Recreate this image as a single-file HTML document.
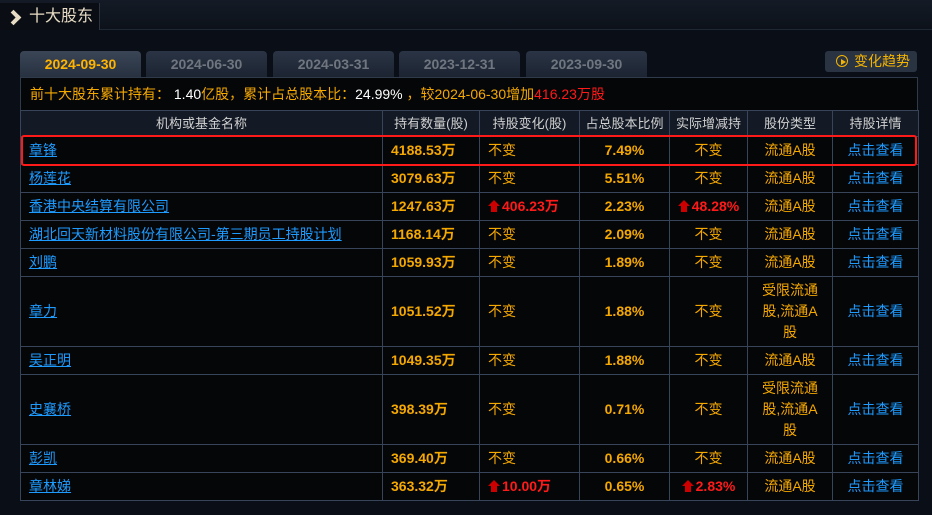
<!DOCTYPE html>
<html><head><meta charset="utf-8"><style>
*{margin:0;padding:0;box-sizing:border-box}
body{width:932px;height:515px;background:#0a0e16;font-family:"Liberation Sans","Noto Sans CJK SC",sans-serif;font-size:14px;position:relative;overflow:hidden;color:#f5a800}
.top{position:absolute;left:0;top:0;width:932px;height:30px;background:linear-gradient(#141b26,#0d121a);border-bottom:1px solid #1f2733}
.ttl{position:absolute;left:0;top:3px;width:100px;height:27px;background:#0a0e14;border-right:1px solid #2a3340;color:#e8dcc4;font-size:16px;line-height:27px;padding-left:29px}
.ttl:before{content:"";position:absolute;left:8px;top:9px;width:7px;height:7px;border-right:4px solid #e8dcc4;border-top:4px solid #e8dcc4;transform:rotate(45deg)}
.tab{position:absolute;top:51px;height:26px;width:121px;background:linear-gradient(#2a3444,#1c2432);border-radius:4px 4px 0 0;color:#707680;font-weight:bold;font-size:14px;text-align:center;line-height:26px}
.tab.a{background:linear-gradient(#3a4556,#273140);color:#ffb400}
.btn{position:absolute;left:825px;top:51px;width:92px;height:21px;background:#2a3342;border-radius:3px;color:#f5b400;font-size:14px;line-height:21px;padding-left:29px}
.btn:before{content:"";position:absolute;left:11px;top:4px;width:10px;height:10px;border:1.5px solid #f5b400;border-radius:50%}
.btn:after{content:"";position:absolute;left:16px;top:8px;border-left:5px solid #f5b400;border-top:3px solid transparent;border-bottom:3px solid transparent}
.sum{position:absolute;left:20px;top:77px;width:898px;height:33px;background:#050607;border:1px solid #2f3a4a;border-bottom:none;line-height:33px;padding-left:9px;font-size:14px}
.w{color:#fff}.r{color:#ff1a1a}
table{position:absolute;left:20px;top:110px;border-collapse:collapse;width:898px;table-layout:fixed}
td,th{border:1px solid #37445a;background:#050607;height:28px;line-height:21px}
th{background:#131a25;color:#d0d0d0;font-weight:normal;font-size:13px;height:26px}
td.n{padding-left:8px}
td.n a{color:#1e9bff;text-decoration:underline}
td.q{padding-left:8px;font-weight:bold}
td.c{padding-left:8px}
td.m{text-align:center}
td.p{font-weight:bold}
td.l{text-align:center;color:#1e9bff}
.up{color:#ff1a1a;font-weight:bold}
.up b{display:inline-block;position:relative;width:12px;height:12px;margin-right:2px;vertical-align:-1px}
.up b:before{content:"";position:absolute;left:0;top:0;border-left:6px solid transparent;border-right:6px solid transparent;border-bottom:6px solid #cc0000}
.up b:after{content:"";position:absolute;left:3px;top:6px;width:6px;height:6px;background:#cc0000}
tr.tall td{height:70px}
.hl{position:absolute;left:21px;top:135px;width:896px;height:31px;border:2px solid #ff1a1a;border-radius:3px}
</style></head><body>
<div class="top"><div class="ttl">十大股东</div></div>
<div class="tab a" style="left:20px">2024-09-30</div>
<div class="tab" style="left:146px">2024-06-30</div>
<div class="tab" style="left:273px">2024-03-31</div>
<div class="tab" style="left:399px">2023-12-31</div>
<div class="tab" style="left:526px">2023-09-30</div>
<div class="btn">变化趋势</div>
<div class="sum">前十大股东累计持有： <span class="w">1.40</span>亿股，累计占总股本比：<span class="w">24.99%</span> ，较2024-06-30增加<span class="r">416.23万股</span></div>
<table>
<colgroup><col style="width:362px"><col style="width:97px"><col style="width:100px"><col style="width:90px"><col style="width:78px"><col style="width:85px"><col style="width:86px"></colgroup>
<tr><th>机构或基金名称</th><th>持有数量(股)</th><th>持股变化(股)</th><th>占总股本比例</th><th>实际增减持</th><th>股份类型</th><th>持股详情</th></tr>
<tr><td class="n"><a>章锋</a></td><td class="q">4188.53万</td><td class="c">不变</td><td class="m p">7.49%</td><td class="m">不变</td><td class="m">流通A股</td><td class="l">点击查看</td></tr>
<tr><td class="n"><a>杨莲花</a></td><td class="q">3079.63万</td><td class="c">不变</td><td class="m p">5.51%</td><td class="m">不变</td><td class="m">流通A股</td><td class="l">点击查看</td></tr>
<tr><td class="n"><a>香港中央结算有限公司</a></td><td class="q">1247.63万</td><td class="c up"><b></b>406.23万</td><td class="m p">2.23%</td><td class="m up"><b></b>48.28%</td><td class="m">流通A股</td><td class="l">点击查看</td></tr>
<tr><td class="n"><a>湖北回天新材料股份有限公司-第三期员工持股计划</a></td><td class="q">1168.14万</td><td class="c">不变</td><td class="m p">2.09%</td><td class="m">不变</td><td class="m">流通A股</td><td class="l">点击查看</td></tr>
<tr><td class="n"><a>刘鹏</a></td><td class="q">1059.93万</td><td class="c">不变</td><td class="m p">1.89%</td><td class="m">不变</td><td class="m">流通A股</td><td class="l">点击查看</td></tr>
<tr class="tall"><td class="n"><a>章力</a></td><td class="q">1051.52万</td><td class="c">不变</td><td class="m p">1.88%</td><td class="m">不变</td><td class="m">受限流通<br>股,流通A<br>股</td><td class="l">点击查看</td></tr>
<tr><td class="n"><a>吴正明</a></td><td class="q">1049.35万</td><td class="c">不变</td><td class="m p">1.88%</td><td class="m">不变</td><td class="m">流通A股</td><td class="l">点击查看</td></tr>
<tr class="tall"><td class="n"><a>史襄桥</a></td><td class="q">398.39万</td><td class="c">不变</td><td class="m p">0.71%</td><td class="m">不变</td><td class="m">受限流通<br>股,流通A<br>股</td><td class="l">点击查看</td></tr>
<tr><td class="n"><a>彭凯</a></td><td class="q">369.40万</td><td class="c">不变</td><td class="m p">0.66%</td><td class="m">不变</td><td class="m">流通A股</td><td class="l">点击查看</td></tr>
<tr><td class="n"><a>章林娣</a></td><td class="q">363.32万</td><td class="c up"><b></b>10.00万</td><td class="m p">0.65%</td><td class="m up"><b></b>2.83%</td><td class="m">流通A股</td><td class="l">点击查看</td></tr>
</table>
<div class="hl"></div>
</body></html>
